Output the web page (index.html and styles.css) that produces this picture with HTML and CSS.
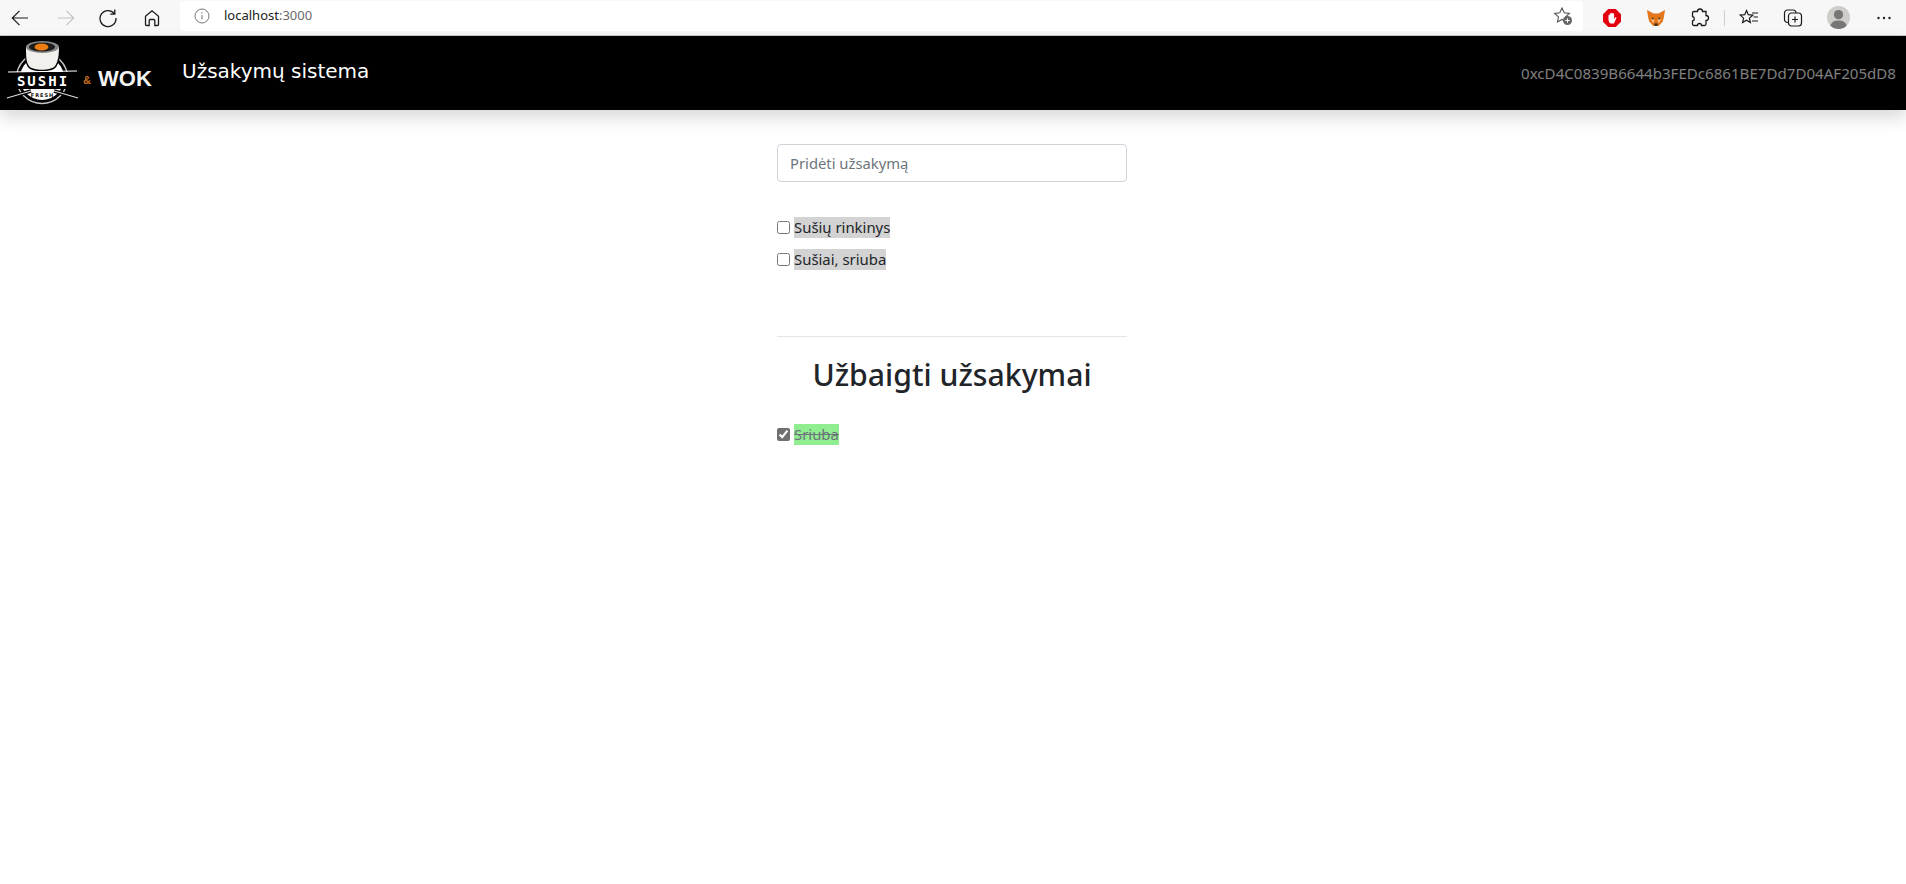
FILE: index.html
```html
<!DOCTYPE html>
<html lang="lt">
<head>
  <meta charset="UTF-8" />
  <meta name="viewport" content="width=device-width, initial-scale=1.0"/>
  <title>Užsakymų sistema</title>
  <link rel="stylesheet" href="styles.css">
</head>
<body>
  <div class="browser-bar">
    <div class="nav-buttons">
      <svg class="btn-icon" viewBox="0 0 20 20"><path d="M18 10H2.5M9.5 2.8 2.3 10l7.2 7.2" fill="none" stroke="#1c1c1c" stroke-width="1.2"/></svg>
      <svg class="btn-icon btn-forward" viewBox="0 0 20 20"><path d="M2 10h15.500M10.500 2.800 17.700 10l-7.200 7.200" fill="none" stroke="#c4c4c4" stroke-width="1.2"/></svg>
      <svg class="btn-icon" viewBox="0 0 20 20"><path d="M16.300 5.600A8 8 0 1 0 18 10M16.800 1.500v4.600h-4.600" fill="none" stroke="#1c1c1c" stroke-width="1.3"/></svg>
      <svg class="btn-icon" viewBox="0 0 20 20"><path d="M3.500 8.200 10 2.800l6.500 5.400v8.300a1 1 0 0 1-1 1h-2.700v-5a1 1 0 0 0-1-1H8.200a1 1 0 0 0-1 1v5H4.500a1 1 0 0 1-1-1z" fill="none" stroke="#1c1c1c" stroke-width="1.3"/></svg>
    </div>
    <div class="address-bar">
      <svg class="info-icon" viewBox="0 0 16 16"><circle cx="8" cy="8" r="7" fill="none" stroke="#777" stroke-width="1"/><path d="M8 7v4.600M8 4.200v1.200" stroke="#777" stroke-width="1.100"/></svg>
      <span class="url">localhost<span class="url-port">:3000</span></span>
      <svg class="fav-add" viewBox="0 0 20 20"><path d="M9 2l2.200 4.800 5.200.6-3.900 3.500 1 5.100L9 13.500 4.500 16l1-5.100L1.600 7.400l5.200-.6z" fill="none" stroke="#555" stroke-width="1.100"/><circle cx="14.500" cy="14.500" r="4.500" fill="#666"/><path d="M12.300 14.500h4.400M14.500 12.300v4.400" stroke="#fff" stroke-width="1"/></svg>
    </div>
    <div class="ext-buttons">
      <svg class="btn-icon" viewBox="0 0 20 20"><path d="M6.200 1h7.600L19 6.200v7.600L13.800 19H6.200L1 13.800V6.200z" fill="#e3000f"/><path d="M6.500 11V7.500c0-1 1.300-1 1.300 0V6c0-1 1.400-1 1.400 0v-.5c0-1 1.500-1 1.500 0V6c0-1 1.400-1 1.400 0v5l1-1.300c.8-.8 1.700 0 1.100.8L12 15.500H8.500c-1.300-1-2-2.500-2-4.500z" fill="#fff"/></svg>
      <svg class="btn-icon" viewBox="0 0 20 20"><path d="M1 2l6.500 3.500h5L19 2l-1.200 7.500-1 4-4 4.500H7.200l-4-4.500-1-4z" fill="#e2761b"/><path d="M5 11l3.300 1-1 3.500zM15 11l-3.300 1 1 3.500z" fill="#f6c9a0"/><path d="M8 15.500h4l-1 2.500H9z" fill="#3a2a20"/><path d="M6 9.500l2 1-2 .7zM14 9.500l-2 1 2 .7z" fill="#2b2118"/></svg>
      <svg class="btn-icon" viewBox="0 0 20 20"><path d="M7.500 3.500a2.500 2.500 0 0 1 5 0H16v4a2.500 2.500 0 0 1 0 5V16a1.500 1.500 0 0 1-1.500 1.500h-3a2 2 0 0 0-4 0H4A1.500 1.500 0 0 1 2.500 16v-3a2.300 2.300 0 0 0 0-4.500V5A1.500 1.500 0 0 1 4 3.500z" fill="none" stroke="#1c1c1c" stroke-width="1.300"/></svg>
      <span class="bar-divider"></span>
      <svg class="btn-icon" viewBox="0 0 20 20"><path d="M7.500 2.500l1.800 4.200 4.500.4-3.400 3 1 4.500-3.900-2.400-3.900 2.400 1-4.500-3.400-3 4.500-.4zM13 5h6M14.500 9H19M13 13h6" fill="none" stroke="#1c1c1c" stroke-width="1.200"/></svg>
      <svg class="btn-icon" viewBox="0 0 20 20"><rect x="5.500" y="5" width="13" height="13" rx="3" fill="none" stroke="#1c1c1c" stroke-width="1.200"/><path d="M12 8.500v6M9 11.500h6M5.500 14.500h-1a3 3 0 0 1-3-3V5a3 3 0 0 1 3-3H10a3 3 0 0 1 3 3" fill="none" stroke="#1c1c1c" stroke-width="1.200"/></svg>
      <svg class="avatar" viewBox="0 0 24 24"><circle cx="12" cy="12" r="12" fill="#cfcdca"/><circle cx="12" cy="9" r="4.800" fill="#767676"/><path d="M3.500 20.500C5 16 8 15 12 15s7 1 8.500 5.500a12 12 0 0 1-17 0z" fill="#767676"/></svg>
      <svg class="btn-icon" viewBox="0 0 20 20"><circle cx="4.500" cy="10" r="1.200" fill="#1c1c1c"/><circle cx="10" cy="10" r="1.200" fill="#1c1c1c"/><circle cx="15.500" cy="10" r="1.200" fill="#1c1c1c"/></svg>
    </div>
  </div>

  <nav class="navbar">
    <div class="brand">
      <svg class="logo" width="162" height="74" viewBox="0 0 162 74">
        <circle cx="42" cy="42" r="25.500" fill="#000" stroke="#c4c4c4" stroke-width="1.500"/>
        <circle cx="42" cy="42" r="22" fill="#fff"/>
        <path d="M26 10c0 8 0 16 3 20 4 5 22 5 26 0 3-4 4-12 4-20z" fill="#000" stroke="#000" stroke-width="3"/>
        <path d="M26 11c0 8 0 15 3 19 4 5 22 5 26 0 3-4 4-11 4-19z" fill="#f1f0ec"/>
        <ellipse cx="42.500" cy="11" rx="16.500" ry="6" fill="#8a8a8a"/>
        <ellipse cx="42" cy="11" rx="13" ry="4.500" fill="#1d1d1d"/>
        <ellipse cx="41.500" cy="11" rx="7" ry="3.500" fill="#ee7d11"/>
        <rect x="13" y="36" width="58" height="17" fill="#000"/>
        <path d="M8 36 77 35" stroke="#fff" stroke-width="1.200"/>
        <path d="M7 62 31 55M78 62 54 55" stroke="#000" stroke-width="3.500"/>
        <path d="M7 62 31 55M78 62 54 55" stroke="#ddd" stroke-width="1.200"/>
        <text class="logo-sushi" x="43" y="50" text-anchor="middle">SUSHI</text>
        <text class="logo-fresh" x="42.500" y="60.500" text-anchor="middle">FRESH</text>
        <text class="logo-amp" x="83" y="48">&amp;</text>
        <text class="logo-wok" x="98" y="50">WOK</text>
      </svg>
      <span class="brand-title">Užsakymų sistema</span>
    </div>
    <span class="account">0xcD4C0839B6644b3FEDc6861BE7Dd7D04AF205dD8</span>
  </nav>

  <main class="orders">
    <input class="order-input" type="text" placeholder="Pridėti užsakymą">
    <ul class="order-list open-orders">
      <li class="order"><input type="checkbox"><span class="order-name pending">Sušių rinkinys</span></li>
      <li class="order"><input type="checkbox"><span class="order-name pending">Sušiai, sriuba</span></li>
    </ul>
    <hr class="divider">
    <h2 class="done-title">Užbaigti užsakymai</h2>
    <ul class="order-list">
      <li class="order"><input type="checkbox" checked><span class="order-name finished">Sriuba</span></li>
    </ul>
  </main>
</body>
</html>
```

FILE: styles.css
```css
* {
  box-sizing: border-box;
}
body {
  margin: 0;
  min-height: 884px;
  background: #fff;
  color: #212529;
  font-family: 'Noto Sans', 'Open Sans', sans-serif;
  font-size: 15.1px;
  line-height: 1.5;
  overflow: hidden;
}
.browser-bar {
  display: flex;
  align-items: center;
  height: 36px;
  background: #f7f7f7;
  border-bottom: 1px solid #c9c9c9;
}
.nav-buttons {
  display: flex;
  align-items: center;
  gap: 24px;
  width: 180px;
  padding-left: 10px;
}
.btn-icon {
  width: 20px;
  height: 20px;
  flex: none;
}
.btn-forward {
  margin: 0 -2px 0 2px;
}
.address-bar {
  display: flex;
  align-items: center;
  width: 1403px;
  height: 30px;
  margin-top: -3px;
  padding: 0 10px 0 14px;
  background: #fff;
  border-radius: 4px;
}
.info-icon {
  width: 16px;
  height: 16px;
}
.url {
  flex: 1;
  margin-left: 14px;
  font-size: 13px;
  color: #222;
}
.url-port {
  color: #6a6a6a;
}
.fav-add {
  width: 20px;
  height: 20px;
}
.ext-buttons {
  display: flex;
  align-items: center;
  gap: 24px;
  padding-left: 19px;
}
.bar-divider {
  width: 1px;
  height: 16px;
  margin: 0 -10px;
  background: #cfcfcf;
}
.avatar {
  width: 23px;
  height: 23px;
  flex: none;
}
.navbar {
  display: flex;
  align-items: center;
  justify-content: space-between;
  height: 74px;
  padding-right: 10px;
  background: #000;
  box-shadow: 0 8px 16px rgba(0, 0, 0, .15);
}
.brand {
  display: flex;
  align-items: center;
}
.logo {
  display: block;
}
.logo-sushi {
  font: 700 14px 'DejaVu Sans Mono', monospace;
  letter-spacing: 2px;
  fill: #fff;
}
.logo-fresh {
  font: 700 5px 'DejaVu Sans', sans-serif;
  letter-spacing: 1px;
  fill: #111;
}
.logo-amp {
  font: 700 11px 'Liberation Sans', sans-serif;
  fill: #c76f1c;
}
.logo-wok {
  font: 700 22px 'Liberation Sans', sans-serif;
  fill: #f4f4f4;
}
.brand-title {
  margin: 0 0 4px 20px;
  color: #fff;
  font-family: 'DejaVu Sans', sans-serif;
  font-size: 20px;
}
.account {
  color: rgba(255, 255, 255, .5);
}
.orders {
  width: 350px;
  margin-left: calc(50% - 176px);
  padding-top: 34px;
}
.order-input {
  display: block;
  width: 100%;
  height: 38px;
  padding: 6px 12px;
  color: #495057;
  font: inherit;
  font-size: 14.8px;
  border: 1px solid #ced4da;
  border-radius: 4px;
}
.order-input::placeholder {
  color: #6c757d;
}
.order-list {
  margin: 0;
  padding: 0;
  list-style: none;
}
.open-orders {
  margin-top: 35px;
}
.order {
  display: flex;
  align-items: center;
  height: 21px;
  margin-bottom: 11px;
  font-size: 14.9px;
}
.order input {
  width: 13px;
  height: 13px;
  margin: 0 4px 0 0;
  accent-color: #707070;
}
.order-name {
  line-height: 21px;
}
.pending {
  background: lightgray;
}
.finished {
  background: lightgreen;
  color: #6c757d;
  text-decoration: line-through;
}
.divider {
  margin: 66px 0 0;
  border: 0;
  border-top: 1px solid rgba(0, 0, 0, .1);
}
.done-title {
  margin: 20px 0 31px;
  font-size: 30.2px;
  font-weight: 500;
  line-height: 36px;
  text-align: center;
}
```
